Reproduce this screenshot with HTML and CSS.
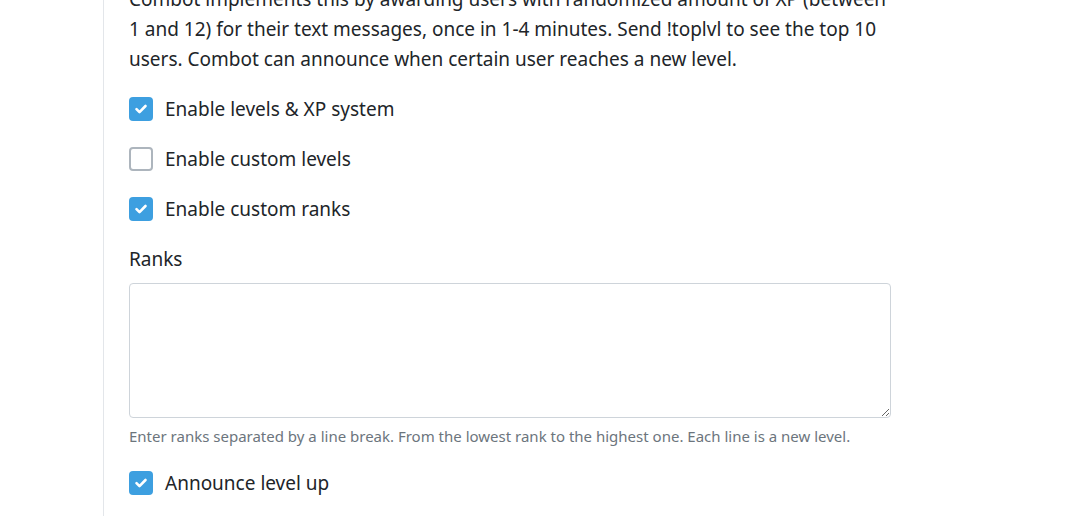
FILE: index.html
```html
<!DOCTYPE html>
<html lang="en">
<head>
  <meta charset="UTF-8">
  <meta name="viewport" content="width=device-width, initial-scale=1.0">
  <title>Levels &amp; XP</title>
  <link rel="stylesheet" href="styles.css">
</head>
<body>
  <div class="layout">
    <aside class="sidebar"></aside>

    <main class="content">
      <p class="intro">Combot implements this by awarding users with randomized amount of XP (between 1 and 12) for their text messages, once in 1-4 minutes. Send !toplvl to see the top 10 users. Combot can announce when certain user reaches a new level.</p>

      <label class="check">
        <span class="box checked">
          <svg viewBox="0 0 24 24" width="24" height="24"><path d="M7.5 12.2l3 3 6-6.2" fill="none" stroke="#fff" stroke-width="2.6" stroke-linecap="round" stroke-linejoin="round"/></svg>
        </span>
        Enable levels &amp; XP system
      </label>

      <label class="check">
        <span class="box"></span>
        Enable custom levels
      </label>

      <label class="check">
        <span class="box checked">
          <svg viewBox="0 0 24 24" width="24" height="24"><path d="M7.5 12.2l3 3 6-6.2" fill="none" stroke="#fff" stroke-width="2.6" stroke-linecap="round" stroke-linejoin="round"/></svg>
        </span>
        Enable custom ranks
      </label>

      <div class="field">
        <label for="ranks" class="field-label">Ranks</label>
        <textarea id="ranks"></textarea>
        <small class="help">Enter ranks separated by a line break. From the lowest rank to the highest one. Each line is a new level.</small>
      </div>

      <label class="check">
        <span class="box checked">
          <svg viewBox="0 0 24 24" width="24" height="24"><path d="M7.5 12.2l3 3 6-6.2" fill="none" stroke="#fff" stroke-width="2.6" stroke-linecap="round" stroke-linejoin="round"/></svg>
        </span>
        Announce level up
      </label>
    </main>
  </div>
</body>
</html>
```

FILE: styles.css
```css
body {
  margin: 0;
  font-family: "Noto Sans", "Open Sans", sans-serif;
  color: #212529;
  background: #fff;
  overflow: hidden;
}
.layout {
  display: flex;
  min-height: 516px;
}
.sidebar {
  width: 103px;
  border-right: 1px solid #e3e6ea;
  flex-shrink: 0;
}
.content {
  width: 762px;
  padding-left: 25px;
  margin-top: -16px;
}
.intro {
  font-size: 19px;
  line-height: 30px;
  margin: 0 0 20px;
}
.check {
  display: flex;
  align-items: center;
  gap: 12px;
  font-size: 19px;
  line-height: 30px;
  margin-bottom: 20px;
  cursor: pointer;
}
.box {
  width: 24px;
  height: 24px;
  box-sizing: border-box;
  border: 2px solid #adb5bd;
  border-radius: 4px;
  background: #fff;
  display: flex;
  flex-shrink: 0;
}
.box.checked {
  background: #3d9fe0;
  border: none;
}
.field {
  margin-bottom: 21px;
}
.field-label {
  display: block;
  font-size: 19px;
  line-height: 30px;
  margin-bottom: 9px;
}
textarea {
  display: block;
  width: 100%;
  height: 135px;
  box-sizing: border-box;
  border: 1px solid #ced4da;
  border-radius: 4px;
  padding: 6px 12px;
  font: inherit;
  resize: vertical;
}
.help {
  display: block;
  margin-top: 7px;
  font-size: 15px;
  line-height: 22px;
  color: #6c757d;
}
```
